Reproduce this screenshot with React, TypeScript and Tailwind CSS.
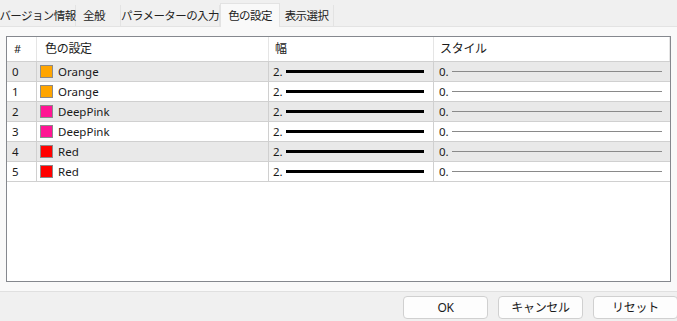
const rows = [
  { id: 0, name: "Orange", color: "#ffa500" },
  { id: 1, name: "Orange", color: "#ffa500" },
  { id: 2, name: "DeepPink", color: "#ff1493" },
  { id: 3, name: "DeepPink", color: "#ff1493" },
  { id: 4, name: "Red", color: "#ff0000" },
  { id: 5, name: "Red", color: "#ff0000" },
];

const tabs = [
  { label: "バージョン情報", w: "w-[76px] justify-center" },
  { label: "全般", w: "w-[45px] justify-start pl-[7px]" },
  { label: "パラメーターの入力", w: "w-[99px] justify-center" },
  { label: "色の設定", w: "w-[60px] justify-center", active: true },
  { label: "表示選択", w: "w-[54px] justify-center" },
];

export default function App() {
  return (
    <div
      className="w-[677px] h-[321px] bg-[#f0f0f0] flex flex-col text-[12px] text-[#1a1a1a] overflow-hidden"
      style={{ fontFamily: '"Noto Sans", "Noto Sans CJK JP", sans-serif' }}
    >
      {/* Tabs */}
      <div className="h-[27px] flex items-end border-b border-[#e3e3e3] text-[11.5px] tracking-[-0.6px] whitespace-nowrap">
        {tabs.map((t) =>
          t.active ? (
            <div
              key={t.label}
              className={`${t.w} h-[24px] bg-[#f9f9f9] border-x border-t border-[#e3e3e3] flex items-center -mb-px`}
            >
              {t.label}
            </div>
          ) : (
            <div
              key={t.label}
              className={`${t.w} h-[21px] border-r border-[#e3e3e3] flex items-center text-[#222]`}
            >
              {t.label}
            </div>
          )
        )}
      </div>

      {/* Panel */}
      <div className="h-[265px] bg-[#f9f9f9] border-b border-[#e0e0e0] px-[6px] pt-[9px]">
        <div className="w-[665px] h-[246px] bg-white border border-[#85888e]">
          <div className="w-[663px] flex h-[25px] border-b border-[#d0d0d0] tracking-[-0.3px]">
            <div className="w-[30px] border-r border-[#e5e5e5] pl-[7px] flex items-center text-[11px]">#</div>
            <div className="w-[232px] border-r border-[#e5e5e5] pl-[8px] flex items-center">色の設定</div>
            <div className="w-[165px] border-r border-[#e5e5e5] pl-[6px] flex items-center">幅</div>
            <div className="w-[236px] border-r border-[#e5e5e5] pl-[6px] flex items-center">スタイル</div>
          </div>
          {rows.map((r) => (
            <div
              key={r.id}
              className={`flex h-[20px] border-b border-[#d0d0d0] text-[11.5px] ${r.id % 2 === 0 ? "bg-[#e9e9e9]" : "bg-white"}`}
            >
              <div className="w-[30px] border-r border-[#d0d0d0] pl-[5px] flex items-center">{r.id}</div>
              <div className="w-[232px] border-r border-[#d0d0d0] pl-[3px] flex items-center gap-[5px]">
                <span className="w-[13px] h-[13px] border border-[#8a8a8a]" style={{ background: r.color }} />
                <span>{r.name}</span>
              </div>
              <div className="w-[165px] border-r border-[#d0d0d0] pl-[4px] pr-[9px] flex items-center gap-[3px]">
                <span>2.</span>
                <span className="flex-1 h-[3px] bg-black" />
              </div>
              <div className="w-[236px] pl-[5px] pr-[8px] flex items-center gap-[3px]">
                <span>0.</span>
                <span className="flex-1 h-px bg-[#8a8a8a]" />
              </div>
            </div>
          ))}
        </div>
      </div>

      {/* Buttons */}
      <div className="flex-1 flex items-center justify-end gap-[10px] pt-[2px] -mr-px">
        {["OK", "キャンセル", "リセット"].map((b) => (
          <button
            key={b}
            className="w-[85px] h-[23px] bg-[#fdfdfd] border border-[#d0d0d0] rounded-[4px] flex items-center justify-center tracking-[-0.3px]"
          >
            {b}
          </button>
        ))}
      </div>
    </div>
  );
}
